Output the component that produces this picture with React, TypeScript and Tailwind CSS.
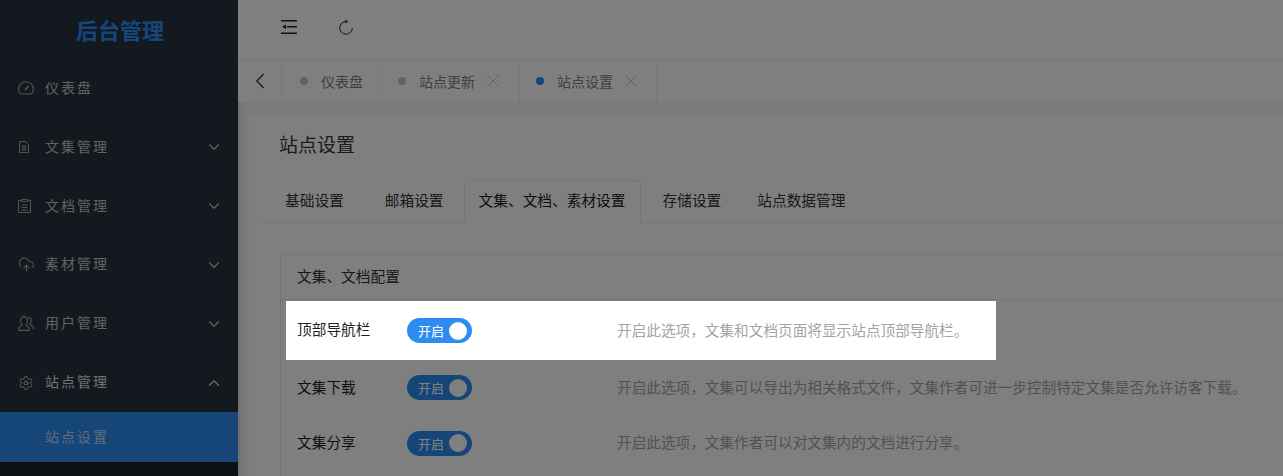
import { ChevronDown, ChevronLeft, ChevronUp, CloudUpload, Settings, X } from "lucide-react";
import React from "react";

function GaugeIcon() {
  return (
    <svg width="16" height="14" viewBox="0 0 16 14" fill="none" stroke="currentColor" strokeWidth="1.1">
      <path d="M2.6 13C1.3 11.7.6 10 .6 8.2a7.4 7.4 0 0 1 14.8 0c0 1.8-.7 3.5-2 4.8z" />
      <path d="M7 9.2 10.6 5" strokeWidth="1.6" />
    </svg>
  );
}

function DocIcon() {
  return (
    <svg width="12" height="12" viewBox="0 0 12 12" fill="none" stroke="currentColor">
      <path d="M1.5.5h6l3 3v8h-9z" />
      <path d="M3.5 5h5M3.5 7h5M3.5 9h5" />
    </svg>
  );
}

function ClipboardIcon() {
  return (
    <svg width="13" height="14" viewBox="0 0 13 14" fill="none" stroke="currentColor">
      <path d="M3.5 1.5h-3v12h12v-12h-3" />
      <path d="M3.5.5h6v2h-6zM3.5 6h6M3.5 8.5h6M3.5 11h6" />
    </svg>
  );
}

function UsersIcon() {
  return (
    <svg width="16" height="15" viewBox="0 0 16 15" fill="none" stroke="currentColor" strokeWidth="1.1">
      <path d="M.6 14.4v-2c0-1.6 3-2.2 3.6-3.2C3 8 2.6 6.400 2.600 4.600 2.600 2.200 4 .6 6 .6s3.400 1.600 3.400 4c0 1.800-.4 3.400-1.600 4.600.6 1 3.600 1.600 3.600 3.200v2z" />
      <path d="M10 1.200c2 0 3.200 1.400 3.200 3.400 0 1.400-.4 2.800-1.300 3.800.5.900 3.500 1.400 3.500 3v1.800" />
    </svg>
  );
}

function IndentIcon() {
  return (
    <svg width="16" height="14" viewBox="0 0 16 14" fill="currentColor">
      <path d="M0 0h16v1.500H0zM6 6h10v1.500H6zM0 12.500h16V14H0zM1 6.800 5 4.500v4.600z" />
    </svg>
  );
}

function RefreshIcon() {
  return (
    <svg width="15" height="16" viewBox="0 0 15 16" fill="none" stroke="currentColor" strokeWidth="1">
      <path d="M8.500 2.600a6.300 6.300 0 1 0 5.800 6.200" />
      <path d="M7.500.4 10 2.500 7.500 4.400z" fill="currentColor" stroke="none" />
    </svg>
  );
}

const menus = [
  { name: "仪表盘", icon: <GaugeIcon />, arrow: false },
  { name: "文集管理", icon: <DocIcon />, arrow: true },
  { name: "文档管理", icon: <ClipboardIcon />, arrow: true },
  { name: "素材管理", icon: <CloudUpload size={17} strokeWidth={1.5} />, arrow: true },
  { name: "用户管理", icon: <UsersIcon />, arrow: true },
];

const tabs = [
  { name: "基础设置", active: false, padding: "pl-[23px] pr-[20px]" },
  { name: "邮箱设置", active: false, padding: "pl-[21px] pr-[20px]" },
  { name: "文集、文档、素材设置", active: true, padding: "" },
  { name: "存储设置", active: false, padding: "pl-[22px] pr-[16px]" },
  { name: "站点数据管理", active: false, padding: "pl-[20px] pr-[20px]" },
];

const pageTabs = [
  { name: "仪表盘", active: false, close: false, box: "w-[100px] pl-[18px]" },
  { name: "站点更新", active: false, close: true, box: "w-[138px] pl-[16px]" },
  { name: "站点设置", active: true, close: true, box: "w-[137px] pl-[16px]" },
];

function Switch() {
  return (
    <div className="flex h-[25px] w-[65px] shrink-0 items-center justify-between rounded-full bg-[#2d8cf0] pl-[11px] pr-[5px] text-[13px] text-white">
      <span>开启</span>
      <span className="h-[18px] w-[18px] rounded-full bg-white" />
    </div>
  );
}

function Row({ label, desc }: { label: string; desc: string }) {
  return (
    <div className="flex h-[55.500px] items-center pl-[16px] text-[14.700px]">
      <div className="w-[110px] shrink-0 pb-[2px] text-[#1f1f1f]">{label}</div>
      <div className="w-[210px] shrink-0">
        <Switch />
      </div>
      <div className="whitespace-nowrap pb-[2px] text-[14.650px] text-[#a3a3a3]">{desc}</div>
    </div>
  );
}

export default function App() {
  return (
    <div className="relative flex h-[476px] w-[1283px] overflow-hidden bg-[#f5f7f9] font-['Noto_Sans_CJK_SC','Liberation_Sans',sans-serif] text-[#515a6e]">
      <aside className="flex w-[238px] shrink-0 flex-col bg-[#1a2029] text-[14px] tracking-[2px] text-[#c4c4c4] shadow-[2px_0_8px_rgba(0,0,0,0.15)]">
        <div className="bg-[#29323e]">
          <div className="flex h-[59px] items-center justify-center pl-[2px] text-[22px] font-bold tracking-normal text-[#2d8cf0]">
            后台管理
          </div>
          {menus.map((menu) => (
            <div key={menu.name} className="flex h-[58.850px] items-center pl-[18px] pr-[15px]">
              <span className="flex w-[27px] shrink-0 items-center text-[#a8a8a8]">{menu.icon}</span>
              <span className="flex-1 pb-[2px]">{menu.name}</span>
              {menu.arrow && <ChevronDown size={18} strokeWidth={1.5} />}
            </div>
          ))}
          <div className="flex h-[58.850px] items-center pl-[18px] pr-[15px] text-[#e0e0e0]">
            <span className="flex w-[27px] shrink-0 items-center text-[#c4c4c4]">
              <Settings size={16} strokeWidth={1.4} />
            </span>
            <span className="flex-1 pb-[2px]">站点管理</span>
            <ChevronUp size={18} strokeWidth={1.5} />
          </div>
        </div>
        <div className="flex h-[50px] shrink-0 items-center bg-[#2d8cf0] pb-[2px] pl-[45px] text-white/70">站点设置</div>
      </aside>

      <main className="flex min-w-0 flex-1 flex-col">
        <header className="flex h-[60px] shrink-0 items-center gap-[41px] border-b border-[#eceef1] bg-white pb-[6px] pl-[43px] text-[#17233d]">
          <IndentIcon />
          <RefreshIcon />
        </header>

        <nav className="flex h-[42px] shrink-0 items-center bg-white text-[14px]">
          <div className="flex h-full w-[44px] shrink-0 items-center justify-center border-r border-[#f0f0f0] text-[#333]">
            <ChevronLeft size={26} strokeWidth={1.2} />
          </div>
          {pageTabs.map((tab) => (
            <div key={tab.name} className={`flex h-full shrink-0 items-center border-r border-[#f0f0f0] ${tab.box}`}>
              <span className={`mr-[13px] h-2 w-2 rounded-full ${tab.active ? "bg-[#2d8cf0]" : "bg-[#c4c4c4]"}`} />
              <span className="text-[#808080]">{tab.name}</span>
              {tab.close && <X size={22} strokeWidth={1} className="ml-[7px] text-[#c0c0c0]" />}
            </div>
          ))}
        </nav>

        <section className="ml-[11px] mt-[12px] flex-1 bg-white pl-[12px] pt-[11px]">
          <h1 className="h-[37px] pl-[18px] text-[19px] leading-[37px] text-[#333]">站点设置</h1>
          <div className="mt-[18px] flex h-[43px] w-[1100px] items-end border-b border-[#e8eaec] pl-[1px] text-[14.700px] text-[#333]">
            {tabs.map((tab) =>
              tab.active ? (
                <div key={tab.name} className="-mb-px flex h-[43px] w-[177px] items-center justify-center rounded-t border border-b-white border-[#e8eaec] bg-white pb-[2px] text-[#1a1a1a]">
                  {tab.name}
                </div>
              ) : (
                <div key={tab.name} className={`flex h-[42px] items-center pb-[2px] ${tab.padding}`}>
                  {tab.name}
                </div>
              ),
            )}
          </div>

          <div className="ml-[19px] mt-[31px] w-[1100px] border border-[#e8eaec] pb-[40px]">
            <div className="flex h-[45px] items-center border-b border-[#e8eaec] pb-[2px] pl-[16px] text-[14.700px] text-[#333]">文集、文档配置</div>
            <div className="relative z-20 ml-[5px] mt-px flex h-[59px] w-[710px] items-center bg-white pl-[11px] text-[14.700px]">
              <div className="w-[110px] shrink-0 pb-[2px] text-[#1f1f1f]">顶部导航栏</div>
              <div className="w-[210px] shrink-0">
                <Switch />
              </div>
              <div className="whitespace-nowrap pb-[2px] text-[14.650px] text-[#a3a3a3]">开启此选项，文集和文档页面将显示站点顶部导航栏。</div>
            </div>
            <Row label="文集下载" desc="开启此选项，文集可以导出为相关格式文件，文集作者可进一步控制特定文集是否允许访客下载。" />
            <Row label="文集分享" desc="开启此选项，文集作者可以对文集内的文档进行分享。" />
          </div>
        </section>
      </main>

      <div className="absolute inset-0 z-10 bg-black/50" />
    </div>
  );
}
